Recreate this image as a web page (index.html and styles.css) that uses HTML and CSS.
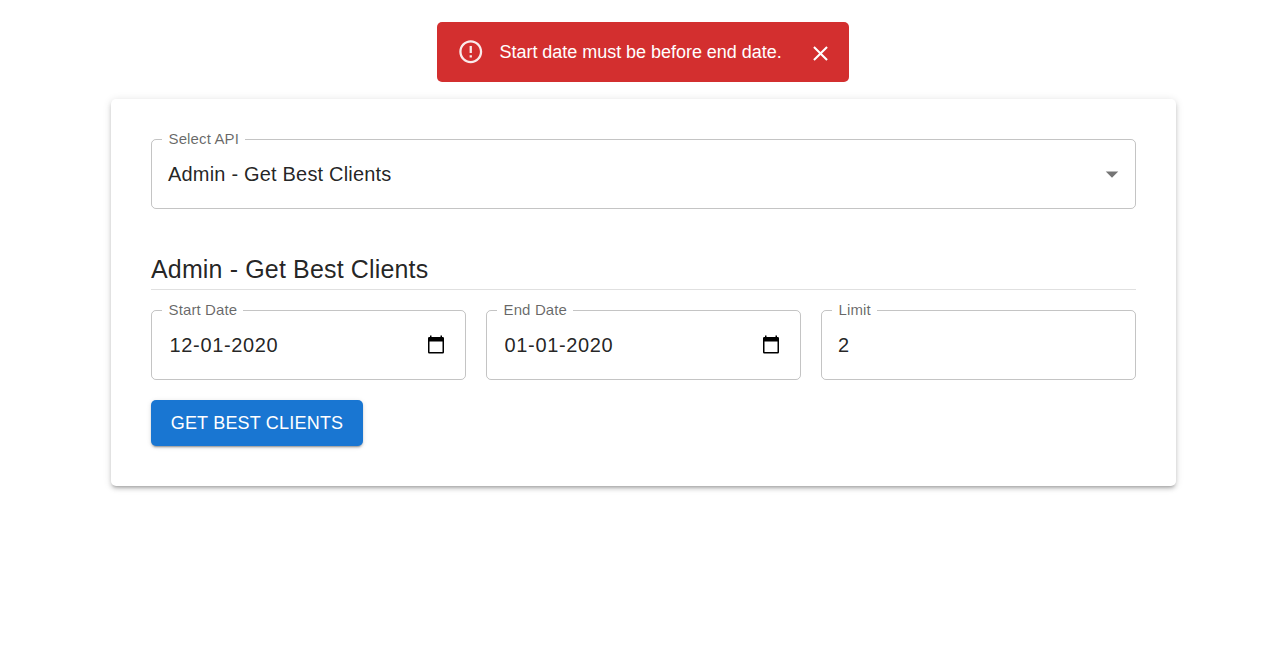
FILE: index.html
```html
<!DOCTYPE html>
<html lang="en">
<head>
<meta charset="utf-8">
<title>Admin - Get Best Clients</title>
<link rel="stylesheet" href="styles.css">
</head>
<body>
<div class="alert" role="alert">
  <svg class="alert-icon" viewBox="0 0 24 24"><path d="M11 15h2v2h-2zm0-8h2v6h-2zm.99-5C6.47 2 2 6.48 2 12s4.47 10 9.99 10C17.52 22 22 17.52 22 12S17.52 2 11.99 2zM12 20c-4.42 0-8-3.58-8-8s3.58-8 8-8 8 3.58 8 8-3.58 8-8 8z"/></svg>
  <span class="alert-text">Start date must be before end date.</span>
  <svg class="alert-close" viewBox="0 0 24 24"><path d="M19 6.41L17.59 5 12 10.59 6.41 5 5 6.41 10.59 12 5 17.59 6.41 19 12 13.41 17.59 19 19 17.59 13.41 12z"/></svg>
</div>
<main class="card">
  <fieldset class="field">
    <legend><span class="label">Select API</span></legend>
    <span class="value">Admin - Get Best Clients</span>
    <svg class="arrow" viewBox="0 0 24 24"><path d="M7 10l5 5 5-5z"/></svg>
  </fieldset>
  <h1 class="title">Admin - Get Best Clients</h1>
  <div class="row">
    <fieldset class="field">
      <legend><span class="label">Start Date</span></legend>
      <span class="value date">12-01-2020</span>
      <svg class="calendar" viewBox="0 0 20 20"><path d="M4 .6h1.500V2h9V.6H16V2h.7Q18 2 18 3.300v14q0 1.300-1.300 1.300H3.300Q2 18.600 2 17.300v-14Q2 2 3.300 2H4zM3.500 6.500v10.600h13V6.500z" fill-rule="evenodd"/></svg>
    </fieldset>
    <fieldset class="field">
      <legend><span class="label">End Date</span></legend>
      <span class="value date">01-01-2020</span>
      <svg class="calendar" viewBox="0 0 20 20"><path d="M4 .6h1.500V2h9V.6H16V2h.7Q18 2 18 3.300v14q0 1.300-1.300 1.300H3.300Q2 18.600 2 17.300v-14Q2 2 3.300 2H4zM3.500 6.500v10.600h13V6.500z" fill-rule="evenodd"/></svg>
    </fieldset>
    <fieldset class="field">
      <legend><span class="label">Limit</span></legend>
      <span class="value">2</span>
    </fieldset>
  </div>
  <button class="button">GET BEST CLIENTS</button>
</main>
</body>
</html>
```
FILE: styles.css
```css
* { box-sizing: border-box; }
body {
  margin: 0;
  min-height: 100vh;
  padding-top: 22px;
  font-family: "Liberation Sans", Arial, sans-serif;
  color: rgba(0, 0, 0, 0.87);
  background: #fff;
}
.alert {
  display: flex;
  align-items: center;
  width: 412px;
  height: 60px;
  margin: 0 auto 17px 437px;
  padding: 0 16px 0 20px;
  border-radius: 5px;
  background: #d32f2f;
  color: #fff;
}
.alert-icon { flex: none; width: 27.5px; height: 27.5px; fill: #fff; opacity: 0.9; }
.alert-text {
  width: 282px;
  margin-left: 15px;
  font-size: 18px;
  letter-spacing: -0.03px;
  white-space: nowrap;
}
.alert-close { flex: none; width: 25px; height: 25px; margin: 3px 0 0 26px; fill: #fff; }
.card {
  width: 1065px;
  height: 387px;
  margin-left: 111px;
  padding: 33px 40px 40px;
  border-radius: 5px;
  box-shadow: 0 3px 3px -2px rgba(0,0,0,.2), 0 3px 4px rgba(0,0,0,.14), 0 1px 8px rgba(0,0,0,.12);
}
.field {
  display: flex;
  align-items: center;
  min-width: 0;
  height: 77px;
  margin: 0;
  padding: 0 19px 0 16px;
  border: 1px solid rgba(0, 0, 0, 0.23);
  border-radius: 5px;
}
.field legend {
  height: 15px;
  margin-left: -6px;
  padding: 0 6px 0 6.5px;
  font-size: 15px;
  line-height: 15px;
  letter-spacing: 0.13px;
  color: rgba(0, 0, 0, 0.6);
}
.label { display: block; margin-top: -1px; }
.value {
  flex: 1;
  margin-bottom: 6px;
  font-size: 20px;
  letter-spacing: 0.19px;
  white-space: nowrap;
}
.arrow { width: 30px; height: 30px; margin: 0 -11px 7px 0; fill: rgba(0,0,0,.54); }
.title {
  height: 40px;
  margin: 41px 0 13px;
  border-bottom: 1px solid rgba(0,0,0,.12);
  font-size: 25px;
  font-weight: 400;
  line-height: 38px;
  letter-spacing: 0.15px;
}
.row { display: grid; grid-template-columns: repeat(3, 1fr); gap: 20px; }
.date { padding-left: 1.5px; letter-spacing: 0.66px; }
.calendar { width: 20px; height: 20px; margin-bottom: 7px; fill: #000; }
.button {
  display: block;
  width: 212px;
  height: 46px;
  margin-top: 20px;
  padding: 0;
  border: 0;
  border-radius: 5px;
  background: #1976d2;
  box-shadow: 0 3px 1px -2px rgba(0,0,0,.2), 0 2px 2px rgba(0,0,0,.14), 0 1px 5px rgba(0,0,0,.12);
  color: #fff;
  font: 18px "Liberation Sans", Arial, sans-serif;
  letter-spacing: 0.2px;
}
```
